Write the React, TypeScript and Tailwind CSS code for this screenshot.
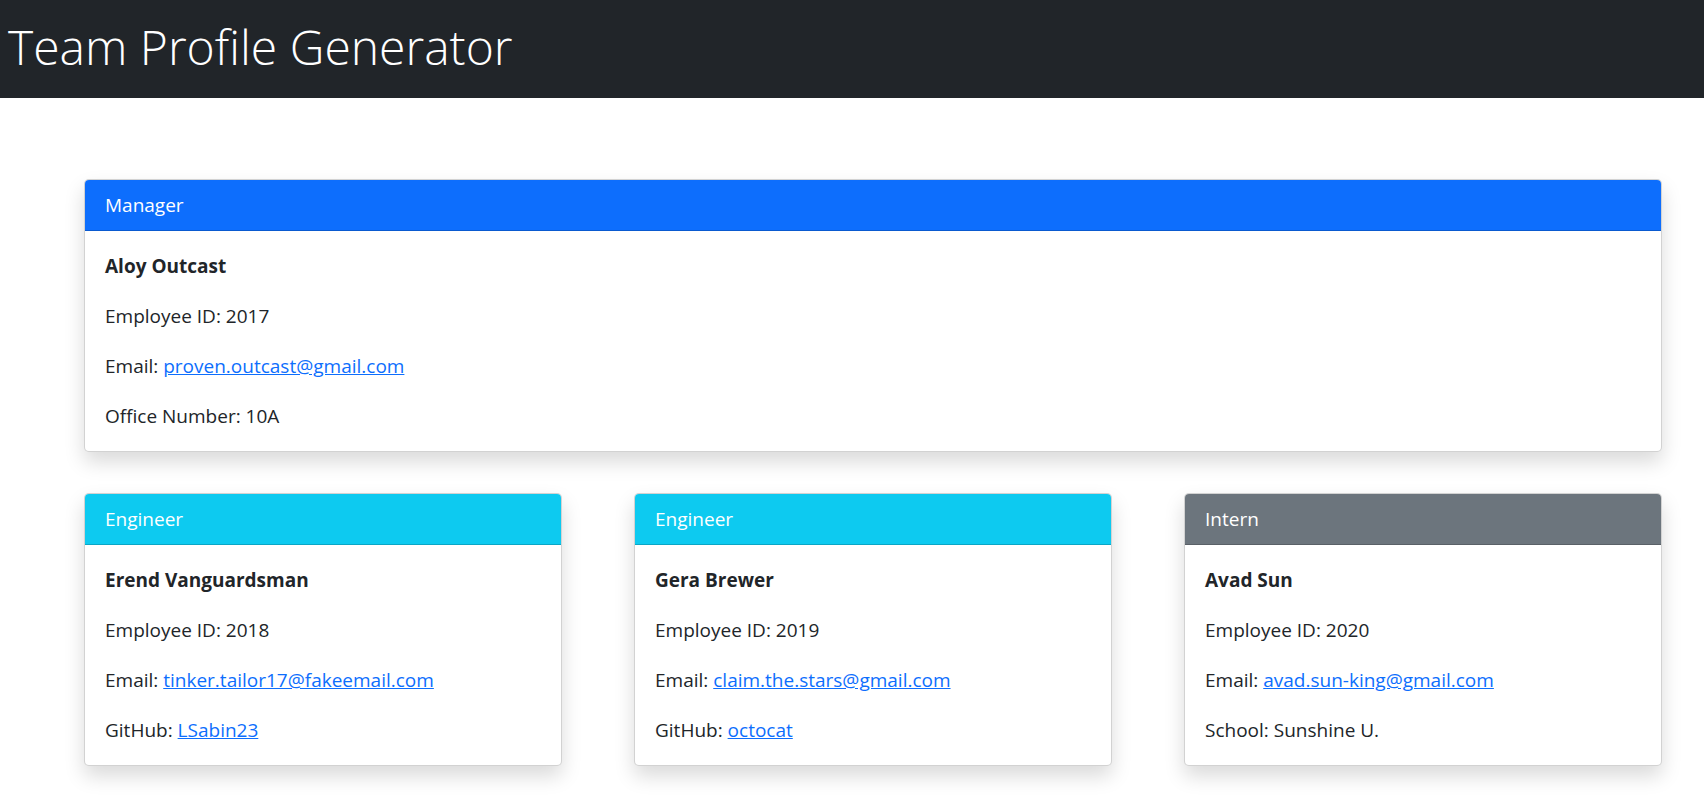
import React from 'react';

type Member = {
  role: string;
  header: string;
  name: string;
  id: number;
  email: string;
  extraLabel: string;
  extraValue: string;
  extraLink?: boolean;
};

const MANAGER: Member = {
  role: 'Manager',
  header: 'bg-[#0d6efd]',
  name: 'Aloy Outcast',
  id: 2017,
  email: 'proven.outcast@gmail.com',
  extraLabel: 'Office Number',
  extraValue: '10A',
};

const TEAM: Member[] = [
  {
    role: 'Engineer',
    header: 'bg-[#0dcaf0]',
    name: 'Erend Vanguardsman',
    id: 2018,
    email: 'tinker.tailor17@fakeemail.com',
    extraLabel: 'GitHub',
    extraValue: 'LSabin23',
    extraLink: true,
  },
  {
    role: 'Engineer',
    header: 'bg-[#0dcaf0]',
    name: 'Gera Brewer',
    id: 2019,
    email: 'claim.the.stars@gmail.com',
    extraLabel: 'GitHub',
    extraValue: 'octocat',
    extraLink: true,
  },
  {
    role: 'Intern',
    header: 'bg-[#6c757d]',
    name: 'Avad Sun',
    id: 2020,
    email: 'avad.sun-king@gmail.com',
    extraLabel: 'School',
    extraValue: 'Sunshine U.',
  },
];

const MemberCard: React.FC<{ m: Member }> = ({ m }) => (
  <div className="bg-white border border-black/[0.175] rounded-[5px] overflow-hidden shadow-[0_10px_20px_rgba(0,0,0,0.15)]">
    <div className={`${m.header} text-white px-5 py-[10px] leading-[30px] border-b border-black/[0.175]`}>
      {m.role}
    </div>
    <div className="p-5 leading-[30px] text-[#212529]">
      <p className="font-bold mb-5">{m.name}</p>
      <p className="mb-5">Employee ID: {m.id}</p>
      <p className="mb-5">
        Email:{' '}
        <a href={`mailto:${m.email}`} className="text-[#0d6efd] underline">
          {m.email}
        </a>
      </p>
      <p>
        {m.extraLabel}:{' '}
        {m.extraLink ? (
          <a href="#" className="text-[#0d6efd] underline">
            {m.extraValue}
          </a>
        ) : (
          m.extraValue
        )}
      </p>
    </div>
  </div>
);

export default function App() {
  return (
    <div className="min-h-screen bg-white text-[19px] font-['Open_Sans',sans-serif]">
      {/* Top bar */}
      <header className="bg-[#212529] h-[98px] flex items-center px-2">
        <h1 className="text-white text-[48px] font-light leading-none -mt-[4px]">Team Profile Generator</h1>
      </header>

      <main className="pl-[84px] pr-[42px] pt-[81px] pb-10">
        <MemberCard m={MANAGER} />

        <div className="grid grid-cols-3 gap-[72px] mt-[41px]">
          {TEAM.map((m) => (
            <MemberCard key={m.id} m={m} />
          ))}
        </div>
      </main>
    </div>
  );
}
